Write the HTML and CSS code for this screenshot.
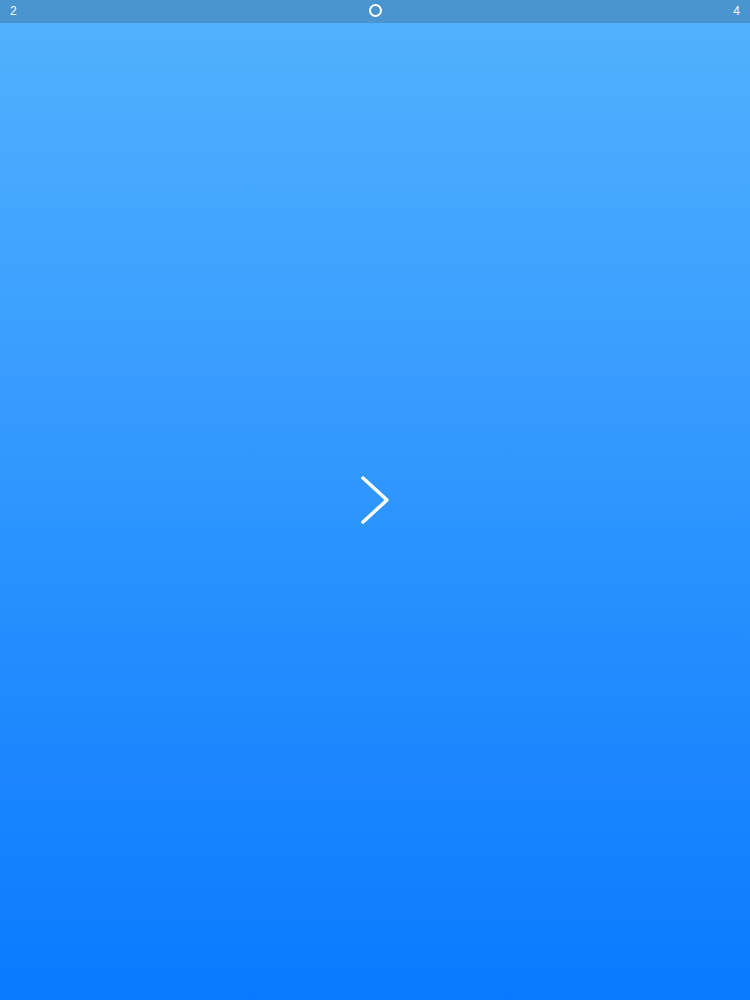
FILE: index.html
```html
<!DOCTYPE html>
<html>
<head>
<meta charset="utf-8">
<link rel="stylesheet" href="styles.css">
</head>
<body>
<div class="page">
  <div class="topbar">
    <span class="num">2</span>
    <span class="ring"></span>
    <span class="num">4</span>
  </div>
  <div class="main">
    <svg class="chevron" width="34" height="52" viewBox="0 0 34 52">
      <polyline points="4,4 28,26 4,48" fill="none" stroke="#fff" stroke-width="3.5" stroke-linecap="round" stroke-linejoin="round"/>
    </svg>
  </div>
</div>
</body>
</html>
```
FILE: styles.css
```css
html, body {
  margin: 0;
  padding: 0;
  width: 750px;
  height: 1000px;
  overflow: hidden;
}
.page {
  width: 750px;
  height: 1000px;
  display: flex;
  flex-direction: column;
  background: linear-gradient(to bottom, #53b2fe 0%, #0979ff 100%);
  font-family: "Liberation Sans", Arial, sans-serif;
}
.topbar {
  height: 23px;
  flex: none;
  background: #4a95cf;
  display: flex;
  align-items: center;
  justify-content: space-between;
  padding: 0 10px;
  color: #fff;
  font-size: 12px;
}
.ring {
  width: 9px;
  height: 9px;
  border: 2px solid #fff;
  border-radius: 50%;
  margin-top: -3px;
}
.num {
  margin-top: -1px;
}
.main {
  flex: 1;
  display: flex;
  align-items: center;
  justify-content: center;
  padding-bottom: 23px;
}
.chevron {
  margin-left: 1px;
}
```
